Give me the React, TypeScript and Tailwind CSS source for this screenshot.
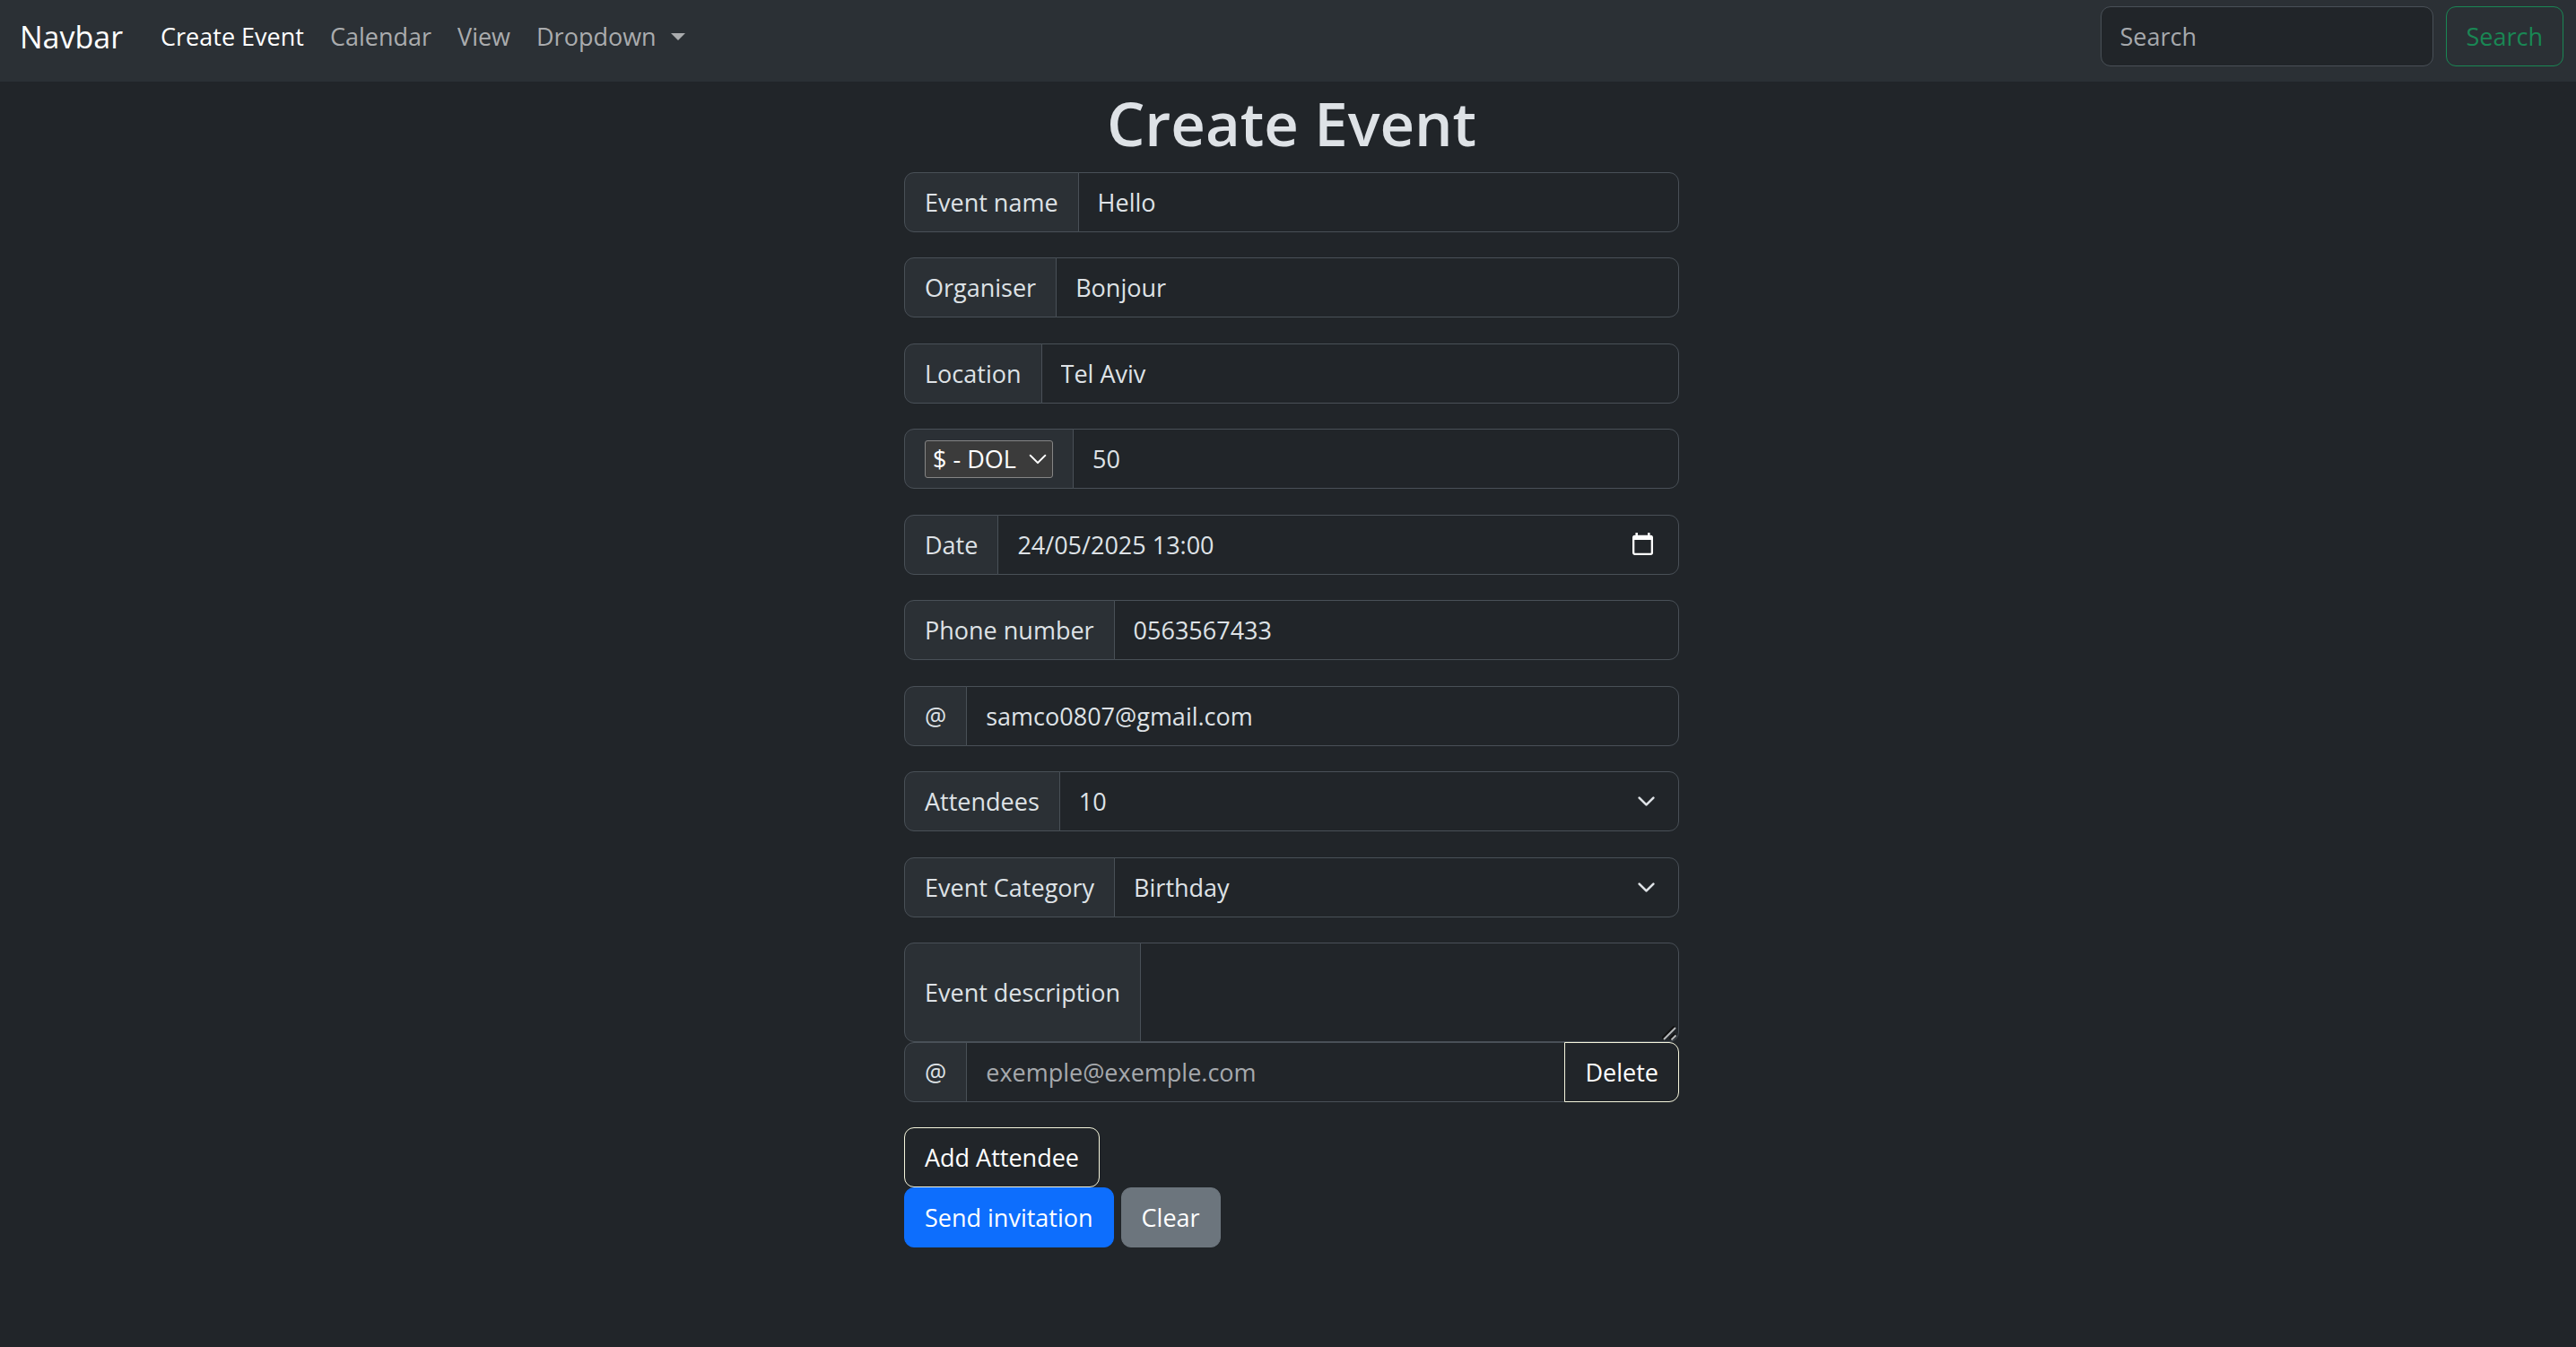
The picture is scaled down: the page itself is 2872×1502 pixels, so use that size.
import type { ReactNode, InputHTMLAttributes } from "react";

const control =
  "min-w-0 flex-1 border border-[#495057] bg-[#212529] px-[21px] text-[27px] leading-[42px] text-[#dee2e6] outline-none placeholder:text-[#a6a9ad] focus:border-[#86b7fe]";

const button =
  "h-[67px] cursor-pointer rounded-[11px] border px-[22px] text-[27px] leading-[42px]";

function Chevron({ className }: { className: string }) {
  return (
    <svg viewBox="0 0 16 16" fill="none" stroke="currentColor" strokeLinecap="round" strokeLinejoin="round" aria-hidden="true" className={className}>
      <path d="m2 5 6 6 6-6" />
    </svg>
  );
}

function Addon({ htmlFor, children }: { htmlFor?: string; children: ReactNode }) {
  const style =
    "-mr-px flex shrink-0 items-center rounded-l-[11px] border border-[#495057] bg-[#2b3035] px-[22px] text-[27px] leading-[42px] whitespace-nowrap";
  return htmlFor ? (
    <label htmlFor={htmlFor} className={style}>
      {children}
    </label>
  ) : (
    <div className={style}>{children}</div>
  );
}

function Row({ children }: { children: ReactNode }) {
  return <div className="flex h-[67px] odd:mb-7 even:mb-[29px]">{children}</div>;
}

function TextField({ id, label, ...rest }: { id: string; label: string } & InputHTMLAttributes<HTMLInputElement>) {
  return (
    <Row>
      <Addon htmlFor={id}>{label}</Addon>
      <input id={id} className={`${control} rounded-r-[11px]`} {...rest} />
    </Row>
  );
}

function SelectField({ id, label, options }: { id: string; label: string; options: string[] }) {
  return (
    <Row>
      <Addon htmlFor={id}>{label}</Addon>
      <div className="relative flex min-w-0 flex-1">
        <select id={id} className={`${control} appearance-none rounded-r-[11px]`}>
          {options.map((o) => (
            <option key={o}>{o}</option>
          ))}
        </select>
        <Chevron className="pointer-events-none absolute top-[23px] right-[26px] size-[21px] stroke-2 text-[#dee2e6]" />
      </div>
    </Row>
  );
}

function NavBar() {
  return (
    <nav className="flex h-[91px] items-start justify-between bg-[#2b3035] px-[14px] pt-[7px]">
      <div className="flex h-[68px] items-center pl-2 text-[27px] leading-[42px] text-[#aaacae]">
        <a href="#" className="mr-[42px] text-[34px] text-white">
          Navbar
        </a>
        <div className="flex items-center gap-[29px]">
          <a href="#create" className="text-white">Create Event</a>
          <a href="#calendar">Calendar</a>
          <a href="#view">View</a>
          <button type="button" className="flex cursor-pointer items-center gap-4">
            Dropdown
            <svg viewBox="0 0 16 8" fill="currentColor" aria-hidden="true" className="h-2 w-4">
              <path d="M0 0h16L8 8z" />
            </svg>
          </button>
        </div>
      </div>
      <form className="flex h-[67px] gap-[14px]" onSubmit={(e) => e.preventDefault()}>
        <input type="search" aria-label="Search" placeholder="Search" className={`${control} w-[371px] flex-none rounded-[11px]`} />
        <button type="submit" className={`${button} border-[#198754] text-[#198754]`}>Search</button>
      </form>
    </nav>
  );
}

export default function App() {
  return (
    <div className="min-h-screen bg-[#212529] font-['Segoe_UI','Open_Sans',sans-serif] text-[#dee2e6]">
      <NavBar />
      <main className="pl-2">
        <form className="mx-auto w-full max-w-[864px]" onSubmit={(e) => e.preventDefault()}>
          <h1 className="mb-[13px] pt-1 text-center text-[67px] leading-[84px] font-semibold">Create Event</h1>
          <div>
            <TextField id="name" label="Event name" defaultValue="Hello" />
            <TextField id="organiser" label="Organiser" defaultValue="Bonjour" />
            <TextField id="location" label="Location" defaultValue="Tel Aviv" />
            <Row>
              <Addon>
                <div className="relative flex">
                  <select aria-label="Currency" className="h-[42px] w-[143px] appearance-none rounded-[3px] border border-[#858585] bg-[#3b3b3b] pl-2 text-[27px] leading-[38px] text-white">
                    <option>$ - DOL</option>
                    <option>€ - EUR</option>
                  </select>
                  <Chevron className="pointer-events-none absolute top-[10px] right-[6px] size-[22px] stroke-[1.5] text-white" />
                </div>
              </Addon>
              <input aria-label="Price" defaultValue="50" className={`${control} rounded-r-[11px]`} />
            </Row>
            <Row>
              <Addon htmlFor="date">Date</Addon>
              <div className="relative flex min-w-0 flex-1">
                <input id="date" defaultValue="24/05/2025 13:00" className={`${control} rounded-r-[11px]`} />
                <button type="button" aria-label="Open calendar" className="absolute top-[20px] right-[29px] cursor-pointer text-white">
                  <svg viewBox="0 0 23 25" fill="none" stroke="currentColor" strokeWidth="2.300" aria-hidden="true" className="h-[25px] w-[23px]">
                    <rect x="1.150" y="4" width="20.700" height="19.800" rx="1.500" />
                    <path d="M1 5.500h21" strokeWidth="5" />
                    <path d="M4.700 0v4M18.300 0v4" strokeWidth="2.500" />
                  </svg>
                </button>
              </div>
            </Row>
            <TextField id="phone" type="tel" label="Phone number" defaultValue="0563567433" />
            <TextField id="email" type="email" label="@" defaultValue="samco0807@gmail.com" />
            <SelectField id="attendees" label="Attendees" options={["10", "20", "50"]} />
            <SelectField id="category" label="Event Category" options={["Birthday", "Wedding", "Meeting"]} />
          </div>
          <div className="flex h-[111px]">
            <Addon htmlFor="description">Event description</Addon>
            <div className="relative flex min-w-0 flex-1">
              <textarea id="description" className={`${control} resize-none rounded-r-[11px] py-[10px]`} />
              <svg viewBox="0 0 16 16" fill="none" aria-hidden="true" className="pointer-events-none absolute right-[3px] bottom-[2px] size-4">
                <path d="M0 14 14 0M8.500 14.500 14.500 8.500" stroke="#111" strokeWidth="2" />
                <path d="M2 15 15 2M10.500 15.500 15.500 10.500" stroke="#b5b7b9" strokeWidth="2" />
              </svg>
            </div>
          </div>
          <div className="mb-7 flex h-[67px]">
            <Addon htmlFor="guest">@</Addon>
            <input id="guest" type="email" placeholder="exemple@exemple.com" className={control} />
            <button type="button" className="-ml-px cursor-pointer rounded-r-[11px] border border-[#f5f5dc] px-[22px] text-[27px] leading-[42px] text-white">
              Delete
            </button>
          </div>
          <div className="flex flex-col items-start">
            <button type="button" className={`${button} border-[#f5f5dc] text-white`}>Add Attendee</button>
            <div className="flex gap-2">
              <button type="submit" className={`${button} border-[#0d6efd] bg-[#0d6efd] text-white`}>Send invitation</button>
              <button type="reset" className={`${button} border-[#6c757d] bg-[#6c757d] text-white`}>Clear</button>
            </div>
          </div>
        </form>
      </main>
    </div>
  );
}
